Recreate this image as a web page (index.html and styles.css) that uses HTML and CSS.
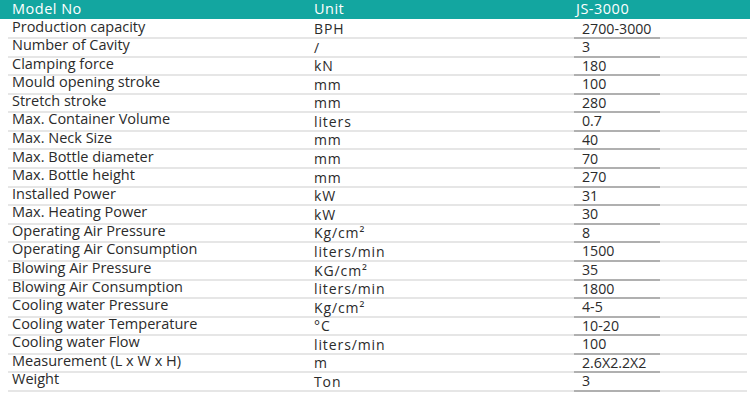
FILE: index.html
```html
<!DOCTYPE html>
<html>
<head>
<meta charset="utf-8">
<link rel="stylesheet" href="styles.css">
</head>
<body>
<div class="head">
  <div class="h1">Model No</div>
  <div class="h2">Unit</div>
  <div class="h3">JS-3000</div>
</div>
<div class="table">
  <div class="row"><div class="c1">Production capacity</div><div class="c2">BPH</div><div class="c3">2700-3000</div><div class="c4"></div></div>
  <div class="row"><div class="c1">Number of Cavity</div><div class="c2">/</div><div class="c3">3</div><div class="c4"></div></div>
  <div class="row"><div class="c1">Clamping force</div><div class="c2">kN</div><div class="c3">180</div><div class="c4"></div></div>
  <div class="row"><div class="c1">Mould opening stroke</div><div class="c2">mm</div><div class="c3">100</div><div class="c4"></div></div>
  <div class="row"><div class="c1">Stretch stroke</div><div class="c2">mm</div><div class="c3">280</div><div class="c4"></div></div>
  <div class="row"><div class="c1">Max. Container Volume</div><div class="c2">liters</div><div class="c3">0.7</div><div class="c4"></div></div>
  <div class="row"><div class="c1">Max. Neck Size</div><div class="c2">mm</div><div class="c3">40</div><div class="c4"></div></div>
  <div class="row"><div class="c1">Max. Bottle diameter</div><div class="c2">mm</div><div class="c3">70</div><div class="c4"></div></div>
  <div class="row"><div class="c1">Max. Bottle height</div><div class="c2">mm</div><div class="c3">270</div><div class="c4"></div></div>
  <div class="row"><div class="c1">Installed Power</div><div class="c2">kW</div><div class="c3">31</div><div class="c4"></div></div>
  <div class="row"><div class="c1">Max. Heating Power</div><div class="c2">kW</div><div class="c3">30</div><div class="c4"></div></div>
  <div class="row"><div class="c1">Operating Air Pressure</div><div class="c2">Kg/cm²</div><div class="c3">8</div><div class="c4"></div></div>
  <div class="row"><div class="c1">Operating Air Consumption</div><div class="c2">liters/min</div><div class="c3">1500</div><div class="c4"></div></div>
  <div class="row"><div class="c1">Blowing Air Pressure</div><div class="c2">KG/cm²</div><div class="c3">35</div><div class="c4"></div></div>
  <div class="row"><div class="c1">Blowing Air Consumption</div><div class="c2">liters/min</div><div class="c3">1800</div><div class="c4"></div></div>
  <div class="row"><div class="c1">Cooling water Pressure</div><div class="c2">Kg/cm²</div><div class="c3">4-5</div><div class="c4"></div></div>
  <div class="row"><div class="c1">Cooling water Temperature</div><div class="c2">°C</div><div class="c3">10-20</div><div class="c4"></div></div>
  <div class="row"><div class="c1">Cooling water Flow</div><div class="c2">liters/min</div><div class="c3">100</div><div class="c4"></div></div>
  <div class="row"><div class="c1">Measurement (L x W x H)</div><div class="c2">m</div><div class="c3">2.6X2.2X2</div><div class="c4"></div></div>
  <div class="row"><div class="c1">Weight</div><div class="c2">Ton</div><div class="c3">3</div><div class="c4"></div></div>
</div>
</body>
</html>
```

FILE: styles.css
```css
html, body {
  margin: 0;
  padding: 0;
  background: #fff;
}
body {
  font-family: "Open Sans", "Liberation Sans", sans-serif;
  color: #2b2b2b;
  width: 750px;
  height: 402px;
  overflow: hidden;
}
.head {
  height: 18.5px;
  background: #13a6a0;
  color: #fff;
  display: grid;
  grid-template-columns: 310px 264px 176px;
  font-size: 14.5px;
  line-height: 16px;
  letter-spacing: 0.5px;
}
.h1 { padding-left: 12px; padding-top: 1px; }
.h2 { padding-left: 4px; padding-top: 1px; }
.h3 { padding-left: 2px; padding-top: 1px; }
.table {
  margin-left: 8px;
  width: 739px;
}
.row {
  display: grid;
  grid-template-columns: 302px 264px 86px 87px;
  height: 18.58px;
  font-size: 14px;
  line-height: 16px;
}
.row > div {
  border-bottom: 2px solid #e6e6e6;
  box-sizing: border-box;
  white-space: nowrap;
}
.c1 { padding-left: 4px; padding-top: 0; font-size: 14.5px; }
.c2 { padding-left: 4px; padding-top: 2.5px; letter-spacing: 0.9px; }
.c3 { padding-left: 8px; padding-top: 2px; font-size: 14.2px; }
.row > .c3 { border-bottom-color: #b0b0b0; }
```
